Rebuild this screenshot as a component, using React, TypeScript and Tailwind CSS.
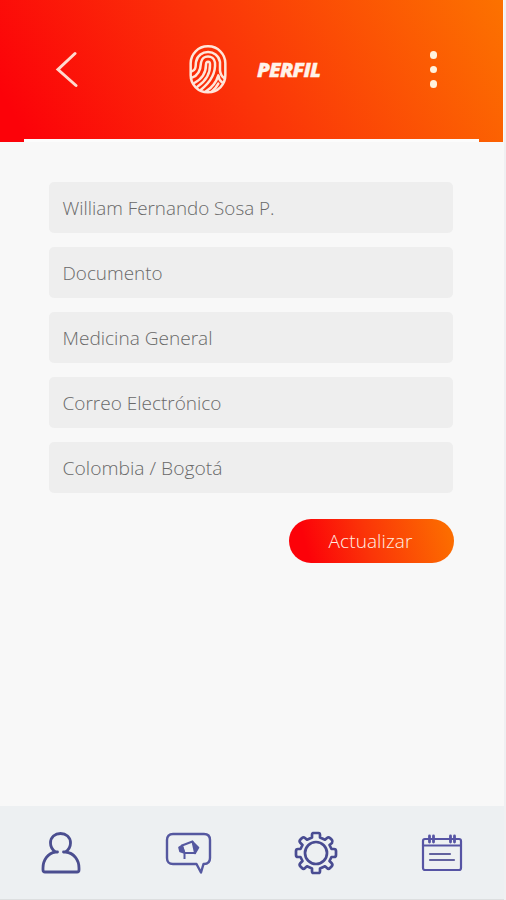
const fields = [
  { text: "William Fernando Sosa P.", length: 212 },
  { text: "Documento", length: 100 },
  { text: "Medicina General", length: 150 },
  { text: "Correo Electrónico", length: 159 },
  { text: "Colombia / Bogotá", length: 160 },
];

function Fingerprint() {
  return (
    <svg width="38" height="49" viewBox="0 0 114 147" fill="none" stroke="#ffe6da" strokeWidth="7.5" strokeLinecap="round" strokeLinejoin="round">
      <rect x="5" y="4" width="104" height="138" rx="51" />
      <path d="M7 80 C23 75 19 63 21 51 C28 12 86 10 93 51 V76 C94 88 99 95 107 100" />
      <path d="M9 98 C30 91 35 73 36 53 C39 28 75 28 78 53 C80 78 70 107 36 134" />
      <path d="M16 114 C40 102 51 84 51 58 C52 47 63 48 63 58 C64 84 49 109 25 125" />
      <path d="M50 140 C70 127 82 111 88 91 C89 101 93 107 99 112 M68 140 C78 132 84 124 88 116" />
    </svg>
  );
}

function Person() {
  return (
    <svg width="42" height="44" viewBox="0 0 42 44" fill="none" stroke="#4b4e90" strokeWidth="2.8" strokeLinejoin="round" strokeLinecap="round">
      <path d="M17.5 21 H15.5 C12 18.5 10.5 15.5 10.5 12 C10.5 6 15 2.5 20.5 2.5 C26 2.5 30.5 6 30.5 12 C30.5 15.5 29 18.5 25.5 21 H23.5 M25.5 21 C34 22 39 29 39 37 V39 Q39 41 37 41 H5 Q3 41 3 39 V37 C3 29 8 22 15.5 21" />
    </svg>
  );
}

function Announcement() {
  return (
    <svg width="48" height="44" viewBox="0 0 48 44" fill="none" stroke="#5558a0" strokeWidth="2.4" strokeLinejoin="round">
      <path d="M8 3 H39 Q45 3 45 9 V27 Q45 33 39 33 H38.5 L36 41.5 L31.5 33 H8 Q2 33 2 27 V9 Q2 3 8 3Z" />
      <path d="M17 14.5 L27.5 10.5 L30 22 H19.5Z M19.5 22 V28" strokeWidth="2" />
      <path d="M17 14.5 L14 16.5 L15 20.5 L19.5 22Z M27.5 10.5 L33.5 16.5 L30 22.5 L30 17Z" fill="#5558a0" strokeWidth="1.6" />
    </svg>
  );
}

function Gear() {
  return (
    <svg width="44" height="44" viewBox="0 0 44 44" fill="none" stroke="#494c92" strokeWidth="2.7" strokeLinejoin="round">
      <path d="M19 2 H24.5 Q26 2 26 4 V6.5 L31 8.7 L33 7 Q34.5 5.8 36 7 L38 9 Q39 10.5 38 12 L35.5 14 L37.5 18 H40 Q42 18 42 20 V24 Q42 26 40 26 H37.5 L35.5 30 L37.5 32 Q39 33.5 38 35 L36 37 Q34.5 38.5 33 37 L31 35.3 L26 37.5 V40 Q26 42 24.5 42 H19.5 Q18 42 18 40 V37.5 L13 35.3 L11 37 Q9.5 38.5 8 37 L6 35 Q5 33.5 6.5 32 L8.5 30 L6.5 26 H4 Q2 26 2 24 V20 Q2 18 4 18 H6.5 L8.5 14 L6.5 12 Q5 10.5 6 9 L8 7 Q9.5 5.8 11 7 L13 8.7 L18 6.5 V4 Q18 2 19.5 2Z" />
      <circle cx="22" cy="22" r="11" />
    </svg>
  );
}

function Calendar() {
  return (
    <svg width="42" height="38" viewBox="0 0 42 38" fill="none" stroke="#5654a4" strokeWidth="2.2" strokeLinecap="round" strokeLinejoin="round">
      <rect x="2" y="5" width="38" height="31" rx="2" />
      <path d="M2 11.5 H40" />
      <path d="M8.5 2 V8 M12.5 2 V8 M29.5 2 V8 M33.5 2 V8" strokeWidth="2.8" />
      <path d="M9 20 H29 M9 26 H33" stroke="#62629f" />
    </svg>
  );
}

export default function App() {
  return (
    <div className="flex h-[900px] w-[506px] flex-col border-r-2 border-[#f0f0f2] bg-[#f8f8f8] font-['Open_Sans',sans-serif]">
      <header className="flex h-[142px] w-[503px] shrink-0 flex-col bg-[linear-gradient(60deg,#fc0209_5%,#fb3508_48%,#fc7200_100%)]">
        <div className="grid h-[139px] shrink-0 grid-cols-[189px_66px_160px_1fr] items-center">
          <button aria-label="Volver" className="ml-[54px] flex w-6">
            <svg width="24" height="38" viewBox="0 0 24 38" fill="none" stroke="#ffd9cf" strokeWidth="3" strokeLinecap="round">
              <path d="M21 2.5 L4 18.5 L22 34.5" />
            </svg>
          </button>
          <Fingerprint />
          <h1>
            <svg width="84" height="30" viewBox="0 0 84 30" className="block">
              <text x="2" y="21.7" fill="#fff3e9" stroke="#fff3e9" strokeWidth="0.3" className="font-['Open_Sans',sans-serif] text-[19px] font-extrabold italic tracking-[-0.8px]" textLength="63" lengthAdjust="spacingAndGlyphs">PERFIL</text>
            </svg>
          </h1>
          <button aria-label="Más opciones" className="ml-[14.5px] flex w-2 flex-col gap-[7px]">
            <span className="size-[7.5px] rounded-full bg-[#fff2dd]" />
            <span className="size-[7.5px] rounded-full bg-[#fff2dd]" />
            <span className="size-[7.5px] rounded-full bg-[#fff2dd]" />
          </button>
        </div>
        <div className="mx-6 h-[3px] bg-[#fcfcfc]" />
      </header>
      <main className="flex flex-1 flex-col pl-[49px] pt-10">
        <div className="flex flex-col gap-[14px]">
          {fields.map((f) => (
            <div key={f.text} className="flex h-[51px] w-[404px] items-center rounded-[5px] bg-[#eeeeee] pl-[13px]">
              <svg width="230" height="30" viewBox="0 0 230 30">
                <text x="0.5" y="21.5" fill="#696969" className="font-['Open_Sans',sans-serif] text-[19px] font-light" textLength={f.length} lengthAdjust="spacingAndGlyphs">{f.text}</text>
              </svg>
            </div>
          ))}
        </div>
        <button className="ml-[240px] mt-[26px] flex h-11 w-[165px] items-center justify-center rounded-full bg-[linear-gradient(75deg,#fc0209_12%,#fb3508_48%,#fc6c00_95%)] pr-0.5 text-[19px] font-[350] tracking-[0.1px] text-[#fff0e4]">
          Actualizar
        </button>
      </main>
      <nav className="flex h-[94px] shrink-0 items-center border-b border-[#dddfe0] bg-[#edf0f2] pl-10">
        <div className="w-[125px]"><Person /></div>
        <div className="w-[129px]"><Announcement /></div>
        <div className="w-[127px]"><Gear /></div>
        <Calendar />
      </nav>
    </div>
  );
}
